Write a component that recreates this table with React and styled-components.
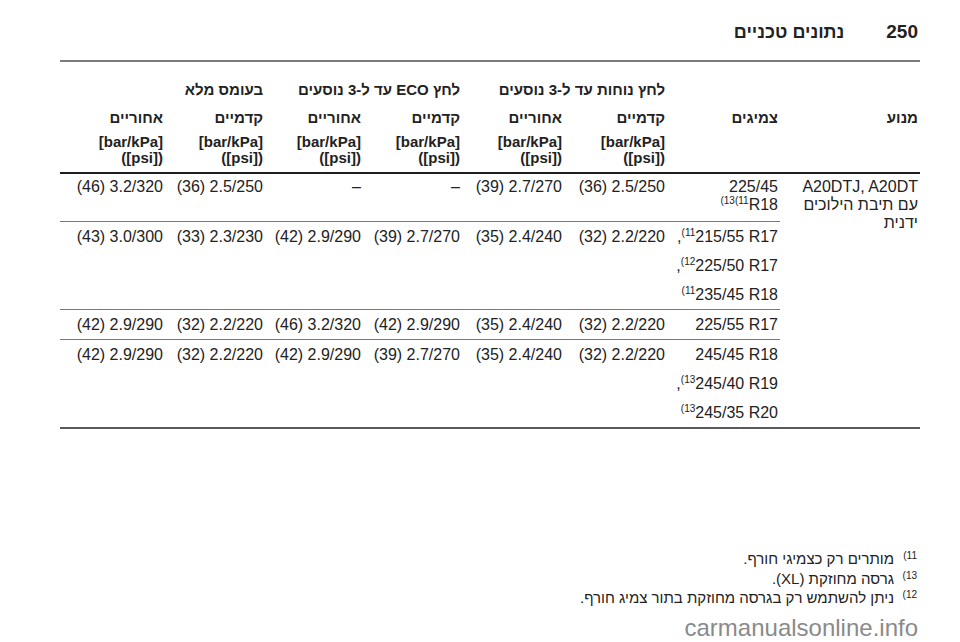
import React from 'react'
import styled, { createGlobalStyle } from 'styled-components'

const Global = createGlobalStyle`
  html, body {
    margin: 0;
    padding: 0;
    background: #fff;
  }
  body {
    font-family: "Liberation Sans", Arial, "Noto Sans", sans-serif;
    color: #222;
  }
`

const Page = styled.div`
  width: 960px;
  height: 642px;
  overflow: hidden;
  box-sizing: border-box;
  padding: 0 40px 0 60px;
  direction: rtl;
`

const Header = styled.div`
  display: flex;
  align-items: center;
  gap: 42px;
  padding: 21px 2px 17px 0;
  border-bottom: 2px solid #7c7c7c;
  font-size: 18px;
  line-height: 22px;
  font-weight: bold;
`

const PageNum = styled.span`
  font-size: 19px;
`

const Table = styled.table`
  width: 860px;
  border-collapse: collapse;
  table-layout: fixed;
`

const Th = styled.th`
  text-align: right;
  vertical-align: top;
  font-size: 15px;
  font-weight: bold;
  line-height: 18px;
  padding: ${p => p.$pad || '0 2px 0 0'};
`

const UnitTh = styled(Th)`
  line-height: 16px;
  padding: 0 2px 6px 0;
  border-bottom: 2px solid #1e1e1e;
`

const Td = styled.td`
  text-align: right;
  vertical-align: top;
  font-size: 16px;
  line-height: 18px;
  padding: ${p => (p.$first ? '4px' : '6px')} 2px ${p => (p.$first ? '7px' : '5px')} 0;
  border-bottom: ${p => (p.$last ? '2px solid #5a5a5a' : '1px solid #7a7a7a')};
  white-space: nowrap;
`

const EngineTd = styled(Td)`
  white-space: normal;
  border-bottom: 2px solid #5a5a5a;
`

const Ltr = styled.span`
  display: inline-block;
  direction: ltr;
  unicode-bidi: isolate;
`

const TireLine = styled.div`
  margin-top: ${p => p.$gap}px;
`

const Sup = styled.span`
  font-size: 10px;
  line-height: 0;
  position: relative;
  top: -6px;
`

const Notes = styled.div`
  margin-top: 120px;
  padding-right: 2px;
  font-size: 15px;
  line-height: 19.5px;
`

const Note = styled.div`
  display: flex;
  align-items: flex-start;
`

const NoteMark = styled.span`
  width: 24px;
  flex: none;
  direction: ltr;
  text-align: right;
  padding-right: 1px;
  box-sizing: border-box;
  font-size: 10px;
  line-height: 14px;
`

const Watermark = styled.div`
  margin-top: 6px;
  padding-right: 2px;
  font-size: 24px;
  line-height: 28px;
  color: #8a8a8a;
  direction: ltr;
  text-align: right;
`

const units = (
  <>
    <Ltr>[bar/kPa]</Ltr>
    <br />
    <Ltr>([psi])</Ltr>
  </>
)

const Tire = ({ pre, sup, text, gap }) => (
  <TireLine $gap={gap}>
    <Ltr>
      {pre}
      {sup && <Sup>{sup}</Sup>}
      {text}
    </Ltr>
  </TireLine>
)

const rows = [
  {
    first: true,
    tight: true,
    tires: [{ text: '225/45' }, { sup: '(13(11', text: 'R18' }],
    vals: ['(36) 2.5/250', '(39) 2.7/270', '–', '–', '(36) 2.5/250', '(46) 3.2/320']
  },
  {
    tires: [
      { pre: ',', sup: '(11', text: '215/55 R17' },
      { pre: ',', sup: '(12', text: '225/50 R17' },
      { sup: '(11', text: '235/45 R18' }
    ],
    vals: ['(32) 2.2/220', '(35) 2.4/240', '(39) 2.7/270', '(42) 2.9/290', '(33) 2.3/230', '(43) 3.0/300']
  },
  {
    tires: [{ text: '225/55 R17' }],
    vals: ['(32) 2.2/220', '(35) 2.4/240', '(42) 2.9/290', '(46) 3.2/320', '(32) 2.2/220', '(42) 2.9/290']
  },
  {
    last: true,
    tires: [
      { text: '245/45 R18' },
      { pre: ',', sup: '(13', text: '245/40 R19' },
      { sup: '(13', text: '245/35 R20' }
    ],
    vals: ['(32) 2.2/220', '(35) 2.4/240', '(39) 2.7/270', '(42) 2.9/290', '(32) 2.2/220', '(42) 2.9/290']
  }
]

const notes = [
  ['(11', 'מותרים רק כצמיגי חורף.'],
  ['(13', 'גרסה מחוזקת (XL).'],
  ['(12', 'ניתן להשתמש רק בגרסה מחוזקת בתור צמיג חורף.']
]

export default function App () {
  return (
    <Page>
      <Global />
      <Header>
        <PageNum>250</PageNum>
        <span>נתונים טכניים</span>
      </Header>
      <Table>
        <colgroup>
          <col style={{ width: 140 }} />
          <col style={{ width: 113 }} />
          <col style={{ width: 103 }} />
          <col style={{ width: 102 }} />
          <col style={{ width: 99 }} />
          <col style={{ width: 98 }} />
          <col style={{ width: 100 }} />
          <col style={{ width: 105 }} />
        </colgroup>
        <thead>
          <tr>
            <Th $pad="19px 2px 5px 0" />
            <Th $pad="19px 2px 5px 0" />
            <Th $pad="19px 2px 5px 0" colSpan={2}>לחץ נוחות עד ל-3 נוסעים</Th>
            <Th $pad="19px 2px 5px 0" colSpan={2}>לחץ ECO עד ל-3 נוסעים</Th>
            <Th $pad="19px 2px 5px 0" colSpan={2}>בעומס מלא</Th>
          </tr>
          <tr>
            <Th $pad="5px 2px 7px 0">מנוע</Th>
            <Th $pad="5px 2px 7px 0">צמיגים</Th>
            <Th $pad="5px 2px 7px 0">קדמיים</Th>
            <Th $pad="5px 2px 7px 0">אחוריים</Th>
            <Th $pad="5px 2px 7px 0">קדמיים</Th>
            <Th $pad="5px 2px 7px 0">אחוריים</Th>
            <Th $pad="5px 2px 7px 0">קדמיים</Th>
            <Th $pad="5px 2px 7px 0">אחוריים</Th>
          </tr>
          <tr>
            <UnitTh />
            <UnitTh />
            {[0, 1, 2, 3, 4, 5].map(i => <UnitTh key={i}>{units}</UnitTh>)}
          </tr>
        </thead>
        <tbody>
          {rows.map((row, r) => (
            <tr key={r}>
              {r === 0 && (
                <EngineTd $first rowSpan={4}>
                  A20DTJ, A20DT
                  <br />
                  עם תיבת הילוכים
                  <br />
                  ידנית
                </EngineTd>
              )}
              <Td $first={row.first} $last={row.last}>
                {row.tires.map((t, i) => (
                  <Tire key={i} {...t} gap={i === 0 || row.tight ? 0 : 11} />
                ))}
              </Td>
              {row.vals.map((v, i) => (
                <Td key={i} $first={row.first} $last={row.last}>
                  <Ltr>{v}</Ltr>
                </Td>
              ))}
            </tr>
          ))}
        </tbody>
      </Table>
      <Notes>
        {notes.map(([mark, text]) => (
          <Note key={mark}>
            <NoteMark>{mark}</NoteMark>
            <span>{text}</span>
          </Note>
        ))}
      </Notes>
      <Watermark>carmanualsonline.info</Watermark>
    </Page>
  )
}
